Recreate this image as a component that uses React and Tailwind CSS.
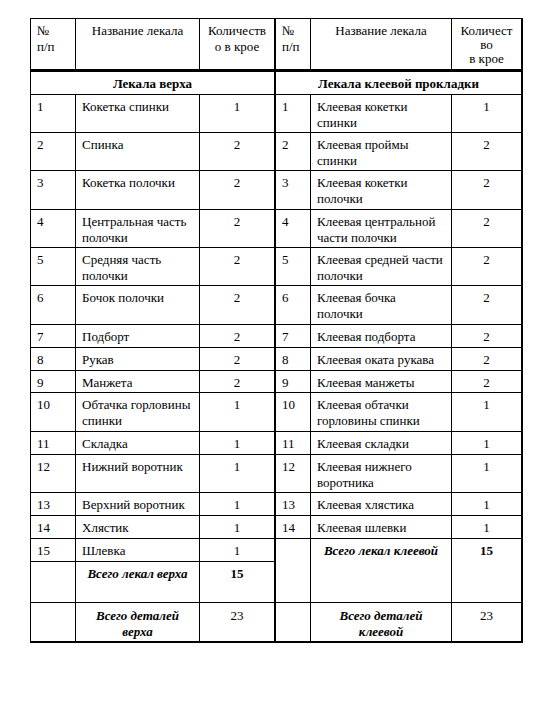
import React from "react";

const rows = [
  ["1", ["Кокетка спинки"], "1", "1", ["Клеевая кокетки", "спинки"], "1"],
  ["2", ["Спинка"], "2", "2", ["Клеевая проймы", "спинки"], "2"],
  ["3", ["Кокетка полочки"], "2", "3", ["Клеевая кокетки", "полочки"], "2"],
  ["4", ["Центральная часть", "полочки"], "2", "4", ["Клеевая центральной", "части полочки"], "2"],
  ["5", ["Средняя часть", "полочки"], "2", "5", ["Клеевая средней части", "полочки"], "2"],
  ["6", ["Бочок полочки"], "2", "6", ["Клеевая бочка", "полочки"], "2"],
  ["7", ["Подборт"], "2", "7", ["Клеевая подборта"], "2"],
  ["8", ["Рукав"], "2", "8", ["Клеевая оката рукава"], "2"],
  ["9", ["Манжета"], "2", "9", ["Клеевая манжеты"], "2"],
  ["10", ["Обтачка горловины", "спинки"], "1", "10", ["Клеевая обтачки", "горловины спинки"], "1"],
  ["11", ["Складка"], "1", "11", ["Клеевая складки"], "1"],
  ["12", ["Нижний воротник"], "1", "12", ["Клеевая нижнего", "воротника"], "1"],
  ["13", ["Верхний воротник"], "1", "13", ["Клеевая хлястика"], "1"],
  ["14", ["Хлястик"], "1", "14", ["Клеевая шлевки"], "1"],
];

const c = "border-r border-b border-black pt-[4px] px-[6px] overflow-hidden whitespace-nowrap";

function Lines({ lines }) {
  return lines.map((l, i) => (
    <React.Fragment key={i}>
      {i > 0 && <br />}
      {l}
    </React.Fragment>
  ));
}

export default function App() {
  return (
    <div className="w-[540px] h-[720px] bg-white text-black pl-[30px] pt-[18px] font-['Liberation_Serif'] text-[13px] leading-[16px]">
      <div className="grid w-[493px] border-l border-t border-black grid-cols-[45px_124px_76px_35px_141px_71px] grid-rows-[53px_23px_38px_38px_39px_38px_38px_39px_23px_23px_22px_39px_23px_38px_23px_23px_23px_41px_40px]">
        {/* header */}
        <div className={`${c} border-b-[3px]`}>№<br />п/п</div>
        <div className={`${c} border-b-[3px] text-center`}>Название лекала</div>
        <div className={`${c} border-b-[3px] pt-[2px] px-[4px] text-center border-r-2`}>Количеств<br />о в крое</div>
        <div className={`${c} border-b-[3px] pt-[3px] px-[4px]`}>№<br />п/п</div>
        <div className={`${c} border-b-[3px] pt-[3px] text-center`}>Название лекала</div>
        <div className={`${c} border-b-[3px] pt-[5px] leading-[14px] text-center border-r-2`}>Количест<br />во<br />в крое</div>

        <div className={`${c} col-span-3 font-bold text-center border-r-2`}>Лекала верха</div>
        <div className={`${c} col-span-3 font-bold text-center border-r-2`}>Лекала клеевой прокладки</div>

        {rows.map((r) => (
          <React.Fragment key={r[0]}>
            <div className={c}>{r[0]}</div>
            <div className={c}><Lines lines={r[1]} /></div>
            <div className={`${c} text-center border-r-2`}>{r[2]}</div>
            <div className={`${c} px-[5px]`}>{r[3]}</div>
            <div className={c}><Lines lines={r[4]} /></div>
            <div className={`${c} text-center border-r-2`}>{r[5]}</div>
          </React.Fragment>
        ))}

        <div className={c}>15</div>
        <div className={c}>Шлевка</div>
        <div className={`${c} text-center border-r-2`}>1</div>
        <div className={`${c} row-span-2`}></div>
        <div className={`${c} row-span-2 text-center font-bold italic`}>Всего лекал клеевой</div>
        <div className={`${c} row-span-2 text-center font-bold border-r-2`}>15</div>

        <div className={c}></div>
        <div className={`${c} text-center font-bold italic`}>Всего лекал верха</div>
        <div className={`${c} text-center font-bold border-r-2`}>15</div>

        <div className={`${c} border-b-2`}></div>
        <div className={`${c} text-center font-bold italic border-b-2 pt-[5px]`}>Всего деталей<br />верха</div>
        <div className={`${c} text-center border-r-2 border-b-2 pt-[5px]`}>23</div>
        <div className={`${c} border-b-2`}></div>
        <div className={`${c} text-center font-bold italic border-b-2 pt-[5px]`}>Всего деталей<br />клеевой</div>
        <div className={`${c} text-center border-r-2 border-b-2 pt-[5px]`}>23</div>
      </div>
    </div>
  );
}
